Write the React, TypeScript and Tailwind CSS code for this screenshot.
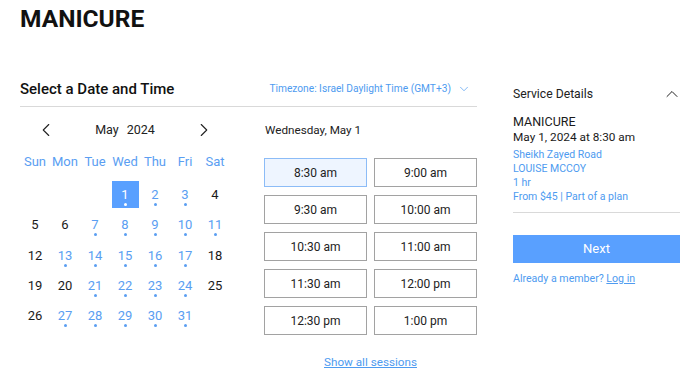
import React from "react";
import { ChevronLeft, ChevronRight, ChevronDown, ChevronUp } from "lucide-react";

const weekDays = ["Sun", "Mon", "Tue", "Wed", "Thu", "Fri", "Sat"];

// null = empty cell, [day, available]
const weeks: (null | [number, boolean])[][] = [
  [null, null, null, [1, true], [2, true], [3, true], [4, false]],
  [[5, false], [6, false], [7, true], [8, true], [9, true], [10, true], [11, true]],
  [[12, false], [13, true], [14, true], [15, true], [16, true], [17, true], [18, false]],
  [[19, false], [20, false], [21, true], [22, true], [23, true], [24, true], [25, false]],
  [[26, false], [27, true], [28, true], [29, true], [30, true], [31, true], null],
];

const slots = [
  "8:30 am",
  "9:00 am",
  "9:30 am",
  "10:00 am",
  "10:30 am",
  "11:00 am",
  "11:30 am",
  "12:00 pm",
  "12:30 pm",
  "1:00 pm",
];

const Calendar = () => {
  return (
    <div className="w-[210px] pt-[8px]">
      <div className="h-[30px] flex items-center justify-between px-[15px] text-[#222]">
        <ChevronLeft size={22} strokeWidth={1.2} />
        <div className="text-[12.5px] flex gap-[8px]">
          <span>May</span>
          <span>2024</span>
        </div>
        <ChevronRight size={22} strokeWidth={1.2} />
      </div>
      <div className="h-[33px] grid grid-cols-7 items-center text-center text-[13px] text-[#5a9ef2]">
        {weekDays.map((d) => (
          <span key={d}>{d}</span>
        ))}
      </div>
      <div className="mt-[3px] grid grid-cols-7 gap-y-[3.25px]">
        {weeks.flat().map((cell, i) => (
          <div key={i} className="h-[27px] flex justify-center">
            {cell && (
              <div
                className={
                  "w-[27px] h-[27px] flex flex-col items-center pt-[7px] text-[13px] leading-[14px] " +
                  (cell[0] === 1
                    ? "bg-[#59a0ff] text-white"
                    : cell[1]
                    ? "text-[#5a9ef2]"
                    : "text-[#1a1a1a]")
                }
              >
                <span>{cell[0]}</span>
                {cell[1] && (
                  <span
                    className={
                      "mt-[1px] w-[3px] h-[3px] rounded-full " +
                      (cell[0] === 1 ? "bg-white" : "bg-[#5a9ef2]")
                    }
                  />
                )}
              </div>
            )}
          </div>
        ))}
      </div>
    </div>
  );
};

const Slots = () => {
  return (
    <div className="w-[213px]">
      <div className="h-[48px] flex items-center text-[11.7px] text-[#222] pl-[1px]">
        Wednesday, May 1
      </div>
      <div className="mt-[3px] grid grid-cols-2 gap-x-[7px] gap-y-[8px]">
        {slots.map((s, i) => (
          <div
            key={s}
            className={
              "h-[29px] flex items-center justify-center text-[12px] text-[#222] border " +
              (i === 0 ? "bg-[#eef5ff] border-[#8cbcf7]" : "border-[#a2a2a2]")
            }
          >
            {s}
          </div>
        ))}
      </div>
      <div className="mt-[19px] text-center text-[11.7px] text-[#4e9bf0] underline">
        Show all sessions
      </div>
    </div>
  );
};

const Sidebar = () => {
  return (
    <div className="w-[169px] pt-[12px]">
      <div className="h-[20px] flex items-center justify-between text-[12.2px] text-[#222]">
        <span>Service Details</span>
        <ChevronUp size={20} strokeWidth={1.2} className="mr-[-2px]" />
      </div>
      <div className="mt-[10px] text-[12.5px] leading-[16px] text-[#1a1a1a]">MANICURE</div>
      <div className="text-[11.8px] leading-[15px] text-[#1a1a1a]">May 1, 2024 at 8:30 am</div>
      <div className="mt-[3px] text-[10.5px] leading-[14px] text-[#4e9bf0]">
        <div>Sheikh Zayed Road</div>
        <div>LOUISE MCCOY</div>
        <div>1 hr</div>
        <div>From $45 | Part of a plan</div>
      </div>
      <div className="mt-[8px] border-b border-[#d9d9d9]" />
      <button className="mt-[22px] w-full h-[28px] bg-[#59a0ff] text-white text-[13px]">
        Next
      </button>
      <div className="mt-[9px] text-[10.6px] leading-[14px] text-[#4e9bf0]">
        Already a member? <span className="underline">Log in</span>
      </div>
    </div>
  );
};

export default function App() {
  return (
    <div
      className="w-[700px] h-[388px] bg-white px-[20px] overflow-hidden"
      style={{ fontFamily: "Roboto, 'Noto Sans', sans-serif" }}
    >
      <h1 className="pt-[4px] text-[24.5px] leading-[30px] font-bold text-[#111]">MANICURE</h1>
      <div className="mt-[38px] flex gap-[36px]">
        <div className="w-[457px]">
          <div className="h-[35px] flex items-center justify-between border-b border-[#d9d9d9]">
            <span className="text-[15px] font-medium text-[#111]">Select a Date and Time</span>
            <span className="flex items-center gap-[6px] text-[10.2px] text-[#4e9bf0] pr-[6px]">
              Timezone: Israel Daylight Time (GMT+3)
              <ChevronDown size={14} strokeWidth={1.2} />
            </span>
          </div>
          <div className="flex gap-[34px]">
            <Calendar />
            <Slots />
          </div>
        </div>
        <Sidebar />
      </div>
    </div>
  );
}
